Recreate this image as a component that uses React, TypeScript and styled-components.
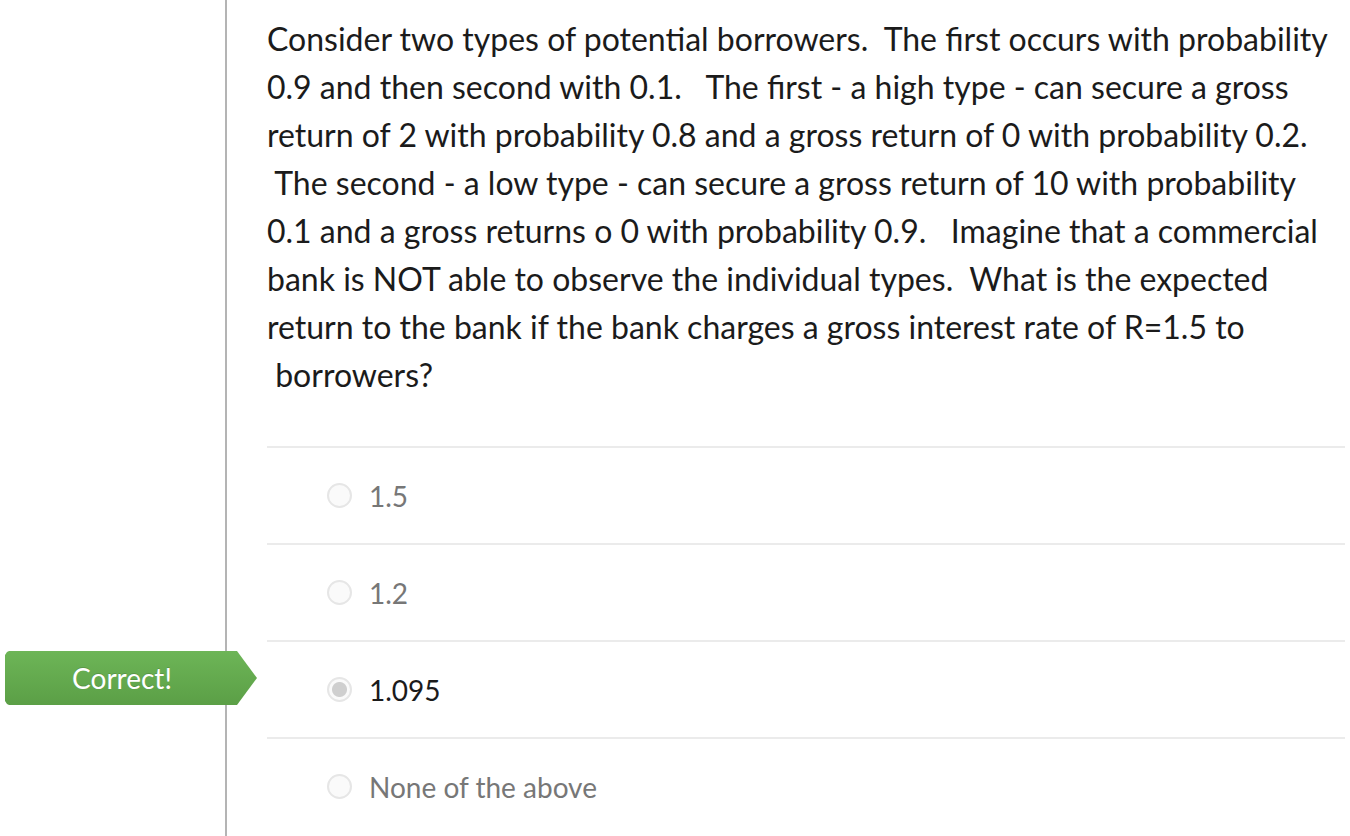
import styled, { createGlobalStyle } from 'styled-components';

const GlobalStyle = createGlobalStyle`
  html, body {
    margin: 0;
    padding: 0;
    background: #ffffff;
  }
  body {
    font-family: Lato, "Open Sans", "Liberation Sans", sans-serif;
  }
`;

const questionLines = [
  'Consider two types of potential borrowers.  The first occurs with probability',
  '0.9 and then second with 0.1.   The first - a high type - can secure a gross',
  'return of 2 with probability 0.8 and a gross return of 0 with probability 0.2.',
  ' The second - a low type - can secure a gross return of 10 with probability',
  '0.1 and a gross returns o 0 with probability 0.9.   Imagine that a commercial',
  'bank is NOT able to observe the individual types.  What is the expected',
  'return to the bank if the bank charges a gross interest rate of R=1.5 to',
  ' borrowers?',
];

const answers = [
  { id: 'a', label: '1.5', selected: false },
  { id: 'b', label: '1.2', selected: false },
  { id: 'c', label: '1.095', selected: true },
  { id: 'd', label: 'None of the above', selected: false },
];

export default function App() {
  return (
    <>
      <GlobalStyle />
      <Page>
        <Gutter />
        <Content>
          <Question>
            {questionLines.map((line, i) => (
              <Line key={i}>{line}</Line>
            ))}
          </Question>
          <AnswerList>
            {answers.map((answer) => (
              <AnswerRow key={answer.id}>
                {answer.selected && <CorrectBadge>Correct!</CorrectBadge>}
                <Radio $selected={answer.selected} />
                <AnswerText $selected={answer.selected}>{answer.label}</AnswerText>
              </AnswerRow>
            ))}
          </AnswerList>
        </Content>
      </Page>
    </>
  );
}

const Page = styled.div`
  display: grid;
  grid-template-columns: 227px 1fr;
  height: 836px;
  overflow: hidden;
`;

const Gutter = styled.div`
  border-right: 2px solid #b4b4b4;
`;

const Content = styled.div`
  padding: 15px 5px 0 40px;
`;

const Question = styled.div`
  color: #1b1b1b;
  font-size: 32px;
  line-height: 48px;
  margin-bottom: 47px;
`;

const Line = styled.div`
  white-space: pre;
`;

const AnswerList = styled.div`
  display: flex;
  flex-direction: column;
`;

const AnswerRow = styled.div`
  position: relative;
  display: flex;
  align-items: center;
  gap: 17px;
  height: 95px;
  padding-left: 60px;
  border-top: 2px solid #ebebeb;
`;

const Radio = styled.span<{ $selected: boolean }>`
  box-sizing: border-box;
  width: 25px;
  height: 25px;
  border-radius: 50%;
  border: 2px solid #e6e6e6;
  background: ${({ $selected }) =>
    $selected ? 'radial-gradient(circle, #cfcfcf 0 7px, #fafafa 8px)' : '#fafafa'};
  flex-shrink: 0;
`;

const AnswerText = styled.span<{ $selected: boolean }>`
  font-size: 28px;
  color: ${({ $selected }) => ($selected ? '#1b1b1b' : '#777777')};
`;

const CorrectBadge = styled.div`
  position: absolute;
  left: -262px;
  top: 9px;
  width: 252px;
  height: 54px;
  box-sizing: border-box;
  padding-right: 18px;
  display: flex;
  align-items: center;
  justify-content: center;
  color: #ffffff;
  font-size: 28px;
  background: linear-gradient(#6db557, #5b9f46);
  clip-path: polygon(0 4px, 2px 1px, 4px 0, calc(100% - 20px) 0, 100% 50%, calc(100% - 20px) 100%, 4px 100%, 2px calc(100% - 1px), 0 calc(100% - 4px));
  text-shadow: 0 -1px 0 rgba(0, 0, 0, 0.15);
`;
